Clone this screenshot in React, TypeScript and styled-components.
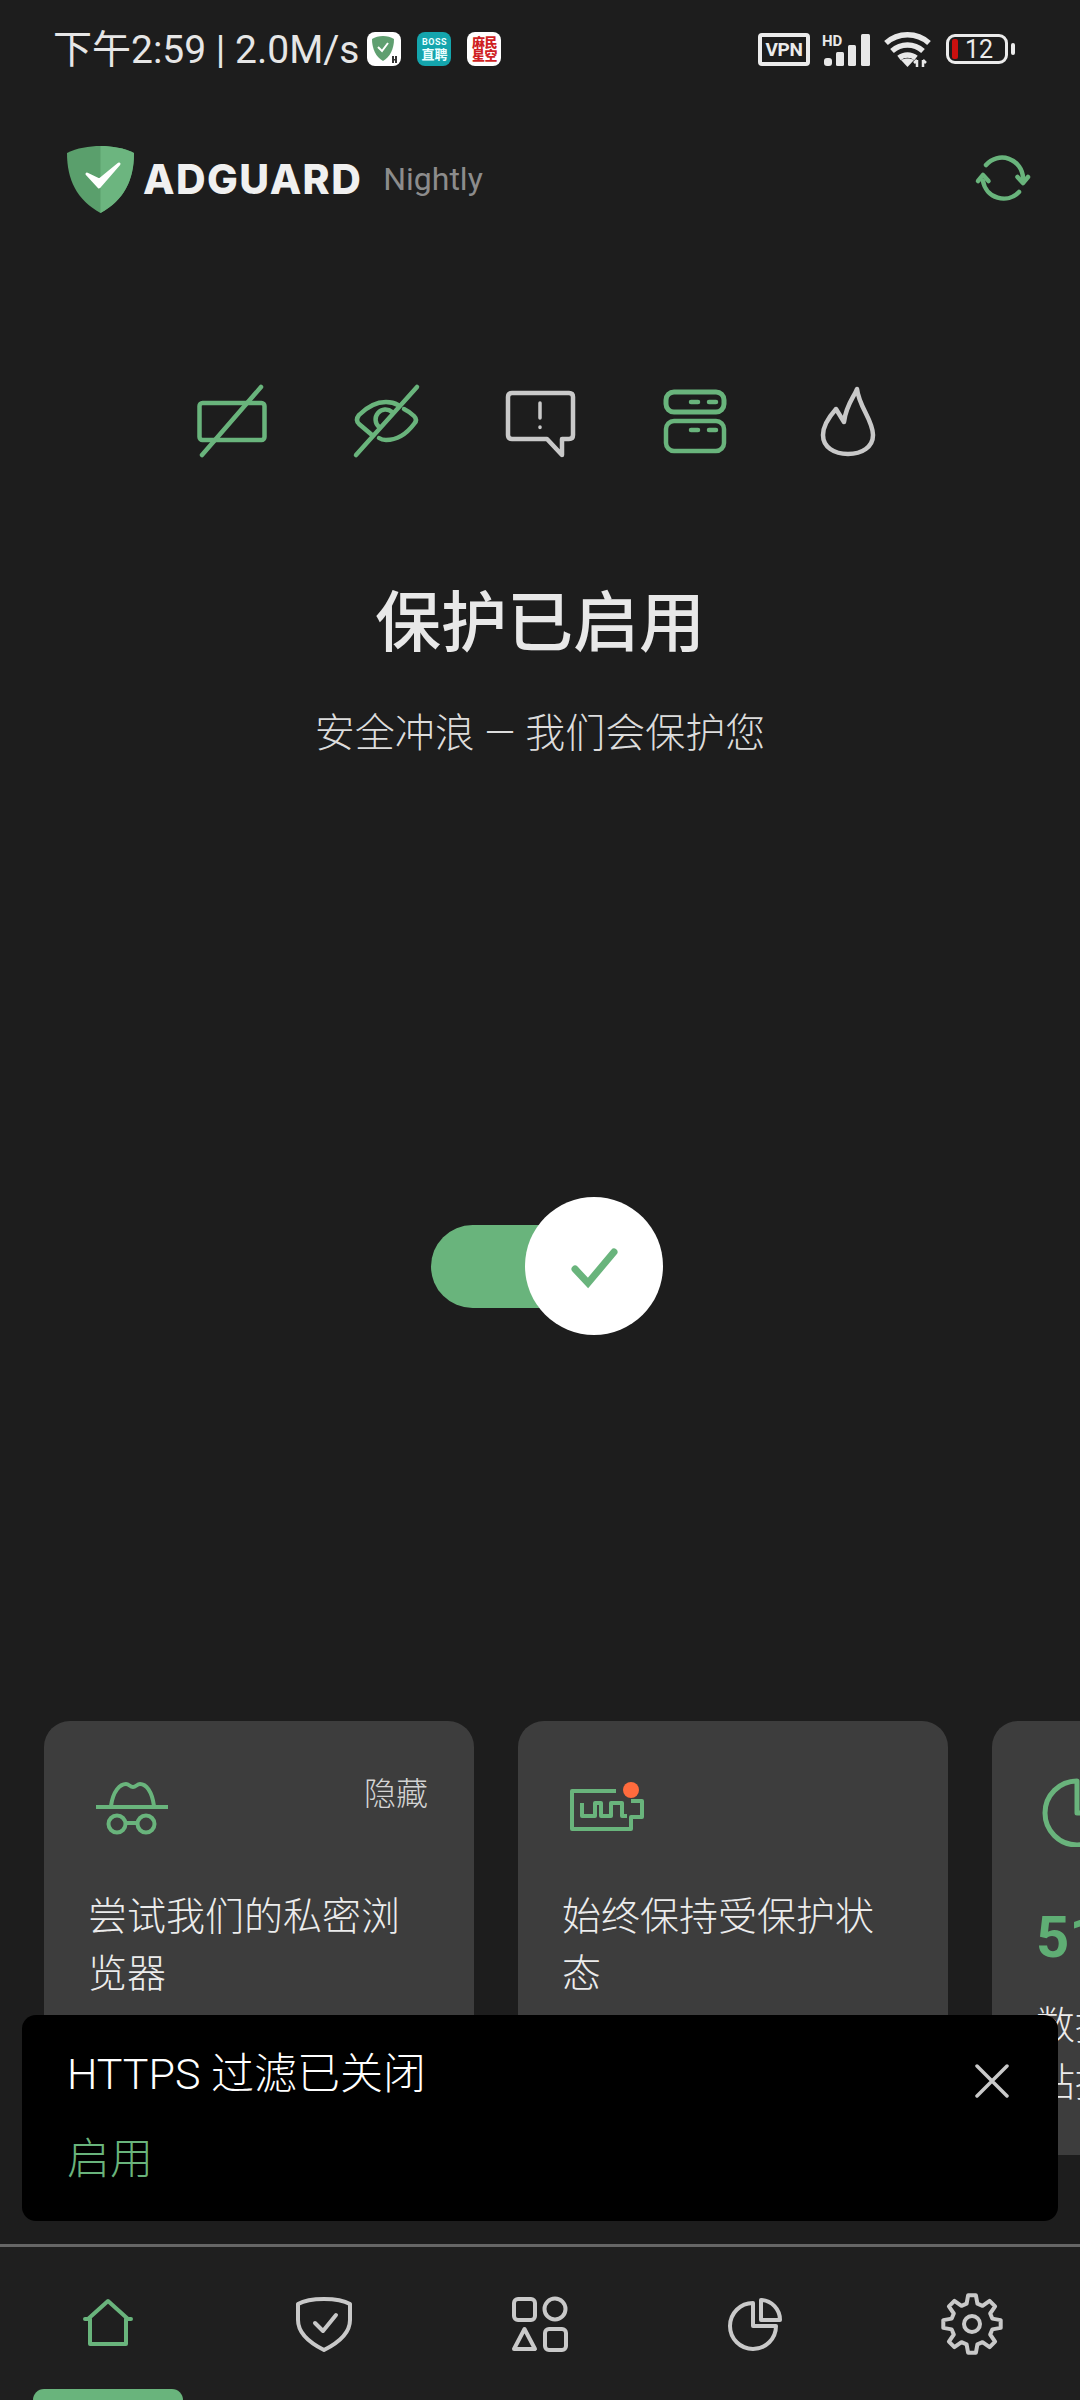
import React from "react";
import styled, { createGlobalStyle } from "styled-components";

const GREEN = "#69b47c";
const GRAY = "#c9c9c9";
const STACK = `Roboto, "Noto Sans CJK SC", sans-serif`;

const Global = createGlobalStyle`
  html, body { margin: 0; padding: 0; background: #1d1d1d; }
  * { box-sizing: border-box; }
`;

const Screen = styled.div`
  position: relative;
  width: 1080px;
  height: 2400px;
  overflow: hidden;
  display: flex;
  flex-direction: column;
  background: #1d1d1d;
  font-family: ${STACK};
  color: #e8e8e8;
`;

/* status bar */
const StatusBar = styled.div`
  height: 98px;
  flex: none;
  display: flex;
  align-items: center;
  padding: 0 65px 0 53px;
`;
const Clock = styled.span`
  font-size: 39px;
  line-height: 1;
  color: #e6e6e6;
  white-space: nowrap;
  margin: 2px 8px 0 0;
`;
const AppBadge = styled.div<{ $bg: string; $fg: string }>`
  width: 34px;
  height: 34px;
  border-radius: 8px;
  margin-right: 16px;
  flex: none;
  display: flex;
  flex-direction: column;
  align-items: center;
  justify-content: center;
  overflow: hidden;
  background: ${(p) => p.$bg};
  color: ${(p) => p.$fg};
  font-weight: 700;
`;
const BadgeSmall = styled.span`
  font-size: 9px;
  line-height: 11px;
  letter-spacing: 0.5px;
`;
const BadgeCjk = styled.span`
  font-size: 13px;
  line-height: 14px;
`;
const SealText = styled.span`
  font-size: 13px;
  line-height: 13px;
  letter-spacing: -0.5px;
  font-weight: 900;
`;
const StatusRight = styled.div`
  margin-left: auto;
  display: flex;
  align-items: center;
  gap: 12px;
`;
const VpnBadge = styled.div`
  width: 52px;
  height: 33px;
  border: 4px solid #ebebeb;
  border-radius: 4px;
  display: flex;
  align-items: center;
  justify-content: center;
  font-size: 19px;
  font-weight: 700;
  letter-spacing: -0.3px;
  color: #ebebeb;
`;
const Battery = styled.div`
  display: flex;
  align-items: center;
  gap: 3px;
  margin-left: 3px;
`;
const BatteryBody = styled.div`
  width: 62px;
  height: 30px;
  border: 3px solid #ebebeb;
  border-radius: 9px;
  display: flex;
  align-items: center;
  padding-left: 3px;
`;
const BatteryFill = styled.div`
  width: 6px;
  height: 20px;
  border-radius: 2px;
  background: #c8100f;
`;
const BatteryText = styled.span`
  font-size: 25px;
  line-height: 1;
  margin-left: 7px;
  color: #ebebeb;
`;
const BatteryNub = styled.div`
  width: 4px;
  height: 12px;
  border-radius: 2px;
  background: #ebebeb;
`;

/* header */
const Header = styled.header`
  height: 162px;
  flex: none;
  display: flex;
  align-items: center;
  padding: 0 47px 0 67px;
`;
const WordMark = styled.span`
  font-family: Inter, sans-serif;
  font-size: 41px;
  font-weight: 800;
  line-height: 1;
  color: #f0f0f0;
  margin-left: 9px;
  letter-spacing: 1.4px;
  white-space: nowrap;
`;
const Edition = styled.span`
  font-size: 32px;
  line-height: 1;
  color: #8c8c8c;
  margin-left: 21px;
`;
const HeaderAction = styled.div`
  margin-left: auto;
  display: flex;
`;

/* feature icons */
const FeatureRow = styled.div`
  margin-top: 121px;
  flex: none;
  display: flex;
  justify-content: center;
  gap: 74px;
`;
const FeatureIcon = styled.svg<{ $on?: boolean }>`
  width: 80px;
  height: 80px;
  flex: none;
  fill: none;
  stroke: ${(p) => (p.$on ? GREEN : GRAY)};
  stroke-width: 4.5;
  stroke-linecap: round;
  stroke-linejoin: round;
`;

/* hero text */
const Title = styled.h1`
  margin: 123px 0 0;
  font-size: 66px;
  line-height: 80px;
  font-weight: 500;
  text-align: center;
  color: #e8e8e8;
`;
const Subtitle = styled.p`
  margin: 45px 0 0;
  font-size: 40px;
  line-height: 50px;
  font-weight: 300;
  text-align: center;
  color: #dcdcdc;
`;

/* toggle */
const Toggle = styled.div`
  position: relative;
  margin: 438px 0 0 431px;
  width: 232px;
  height: 138px;
  flex: none;
  display: flex;
  align-items: center;
`;
const ToggleTrack = styled.div`
  width: 190px;
  height: 83px;
  border-radius: 42px;
  background: ${GREEN};
`;
const ToggleKnob = styled.div`
  position: absolute;
  top: 0;
  right: 0;
  width: 138px;
  height: 138px;
  border-radius: 50%;
  background: #fff;
  display: flex;
  align-items: center;
  justify-content: center;
`;

/* cards */
const CardRow = styled.div`
  margin-top: 386px;
  padding-left: 44px;
  flex: none;
  display: flex;
  gap: 44px;
`;
const Card = styled.article`
  width: 430px;
  height: 434px;
  flex: none;
  border-radius: 26px;
  background: #3d3d3d;
  padding: 0 46px 0 44px;
`;
const CardHead = styled.div<{ $h: number }>`
  height: ${(p) => p.$h}px;
  padding-top: 56px;
  display: flex;
  justify-content: space-between;
  align-items: flex-start;
`;
const CardIcon = styled.svg`
  width: 80px;
  height: 70px;
  margin-left: 2px;
  flex: none;
  fill: none;
  stroke: ${GREEN};
  stroke-width: 4;
  stroke-linejoin: round;
`;
const Dismiss = styled.span`
  font-size: 32px;
  line-height: 40px;
  font-weight: 300;
  color: #d4d4d4;
  margin-top: -3px;
`;
const CardText = styled.p`
  margin: 0;
  font-size: 39px;
  line-height: 57px;
  font-weight: 300;
  color: #ececec;
`;
const CardStat = styled.div`
  font-size: 58px;
  line-height: 64px;
  font-weight: 700;
  color: #5fae74;
  margin-bottom: 29px;
`;

/* toast */
const Toast = styled.div`
  position: absolute;
  left: 22px;
  bottom: 179px;
  width: 1036px;
  height: 206px;
  border-radius: 14px;
  background: #000;
  padding: 31px 49px 0 45px;
  display: flex;
  justify-content: space-between;
  align-items: flex-start;
`;
const ToastTitle = styled.div`
  font-size: 43px;
  line-height: 56px;
  font-weight: 300;
  color: #fff;
`;
const ToastAction = styled.div`
  font-size: 43px;
  line-height: 56px;
  font-weight: 300;
  color: ${GREEN};
  margin-top: 29px;
`;
const ToastClose = styled.svg`
  width: 34px;
  height: 34px;
  margin-top: 18px;
  flex: none;
  stroke: ${GRAY};
  stroke-width: 3.5;
  stroke-linecap: round;
`;

/* nav */
const Nav = styled.nav`
  margin-top: auto;
  height: 156px;
  flex: none;
  border-top: 3px solid #666;
  background: #1f1f1f;
  display: grid;
  grid-template-columns: repeat(5, 1fr);
`;
const Tab = styled.div`
  position: relative;
  display: flex;
  align-items: center;
  justify-content: center;
`;
const TabIcon = styled.svg<{ $on?: boolean }>`
  width: 64px;
  height: 64px;
  fill: none;
  stroke: ${(p) => (p.$on ? GREEN : GRAY)};
  stroke-width: 4;
  stroke-linejoin: round;
  stroke-linecap: round;
`;
const TabMarker = styled.div`
  position: absolute;
  left: 33px;
  bottom: 0;
  width: 150px;
  height: 11px;
  border-radius: 12px 12px 0 0;
  background: ${GREEN};
`;

function gearPath(teeth: number, cx: number, cy: number, rOut: number, rIn: number) {
  const pts: string[] = [];
  const step = (Math.PI * 2) / teeth;
  for (let i = 0; i < teeth; i++) {
    const a = -Math.PI / 2 + i * step;
    const seq: [number, number][] = [
      [rIn, a - step * 0.33],
      [rOut, a - step * 0.17],
      [rOut, a + step * 0.17],
      [rIn, a + step * 0.33],
    ];
    seq.forEach(([r, t]) => {
      pts.push(`${(cx + r * Math.cos(t)).toFixed(1)} ${(cy + r * Math.sin(t)).toFixed(1)}`);
    });
  }
  return `M${pts.join(" L")} Z`;
}

const Shield = () => (
  <svg width="67" height="67" viewBox="0 0 67 67">
    <path d="M33.5 0C45 0 57 2 67 7C67 34 57 54 33.5 67C10 54 0 34 0 7C10 2 22 0 33.5 0Z" fill="#5a9f6c" />
    <path d="M33.5 0C45 0 57 2 67 7C67 34 57 54 33.5 67Z" fill="#6cb57f" />
    <path d="M20 28L32 41L52 18L32.5 34Z" fill="#fff" stroke="#fff" strokeWidth="3" strokeLinejoin="round" />
  </svg>
);

const Refresh = () => (
  <svg width="60" height="50" viewBox="0 0 60 50" fill="none" stroke={GREEN} strokeWidth="4.5" strokeLinecap="round" strokeLinejoin="round">
    <path d="M13 11A21 21 0 0 1 50 24" />
    <path d="M44.5 23L50 29L55 23" />
    <path d="M46 38A21 21 0 0 1 10 27" />
    <path d="M5 27L10 21L15.5 27" />
  </svg>
);

const SignalIcon = () => (
  <svg width="50" height="35" viewBox="0 0 50 35" fill="#e8e8e8">
    <text x="0" y="14" fontFamily="Roboto, sans-serif" fontSize="15" fontWeight="700">HD</text>
    <rect x="2" y="26" width="8" height="8" rx="3" />
    <rect x="14" y="20" width="8" height="14" rx="1.5" />
    <rect x="26" y="13" width="8" height="21" rx="1.5" />
    <rect x="39" y="2" width="9" height="32" rx="1.5" />
  </svg>
);

const WifiIcon = () => (
  <svg width="47" height="37" viewBox="0 0 47 37" fill="none" stroke="#e8e8e8" strokeWidth="5.5">
    <path d="M2 12C14 1 33 1 45 12" />
    <path d="M8 20C17 12 30 12 39 20" />
    <path d="M15 27C20 23 27 23 32 27" />
    <path d="M23.5 36L17 29C21 27 26 27 30 29Z" fill="#e8e8e8" stroke="none" />
    <path d="M33 36V29M33 29L30 32" strokeWidth="2.5" />
    <path d="M39 29V36M39 29L42 32" strokeWidth="2.5" />
  </svg>
);

const MiniShield = () => (
  <svg width="28" height="30" viewBox="0 0 28 30">
    <path d="M13 2C17 2 21 3 24 5C24 15 20 23 13 27C6 23 2 15 2 5C5 3 9 2 13 2Z" fill="#5f9f70" />
    <path d="M8 13L12 17L18 9" fill="none" stroke="#fff" strokeWidth="2" />
    <rect x="22" y="22" width="2" height="7" fill="#333" />
    <rect x="25" y="22" width="2" height="7" fill="#333" />
    <rect x="22" y="25" width="5" height="1.5" fill="#333" />
  </svg>
);

export default function App() {
  return (
    <Screen>
      <Global />
      <StatusBar>
        <Clock>下午2:59 | 2.0M/s</Clock>
        <AppBadge $bg="#fff" $fg="#333"><MiniShield /></AppBadge>
        <AppBadge $bg="#14a5ad" $fg="#eaffff">
          <BadgeSmall>BOSS</BadgeSmall>
          <BadgeCjk>直聘</BadgeCjk>
        </AppBadge>
        <AppBadge $bg="#fff" $fg="#cf1f24">
          <SealText>麻民</SealText>
          <SealText>星空</SealText>
        </AppBadge>
        <StatusRight>
          <VpnBadge>VPN</VpnBadge>
          <SignalIcon />
          <WifiIcon />
          <Battery>
            <BatteryBody>
              <BatteryFill />
              <BatteryText>12</BatteryText>
            </BatteryBody>
            <BatteryNub />
          </Battery>
        </StatusRight>
      </StatusBar>

      <Header>
        <Shield />
        <WordMark>ADGUARD</WordMark>
        <Edition>Nightly</Edition>
        <HeaderAction><Refresh /></HeaderAction>
      </Header>

      <FeatureRow>
        <FeatureIcon $on viewBox="0 0 80 80">
          <rect x="7.5" y="22" width="65" height="37" rx="3" />
          <path d="M69 6L10 74" />
        </FeatureIcon>
        <FeatureIcon $on viewBox="0 0 80 80">
          <path d="M26 54L13 43Q9 39 13 34Q26 21 40 21Q47 21 52 24" />
          <path d="M58 28Q64 31 68 35Q72 39 68 43Q56 59 40 59Q36 59 33 57" />
          <path d="M46 31A9 9 0 0 0 33 46" />
          <path d="M71 6L10 74" />
        </FeatureIcon>
        <FeatureIcon viewBox="0 0 80 80">
          <path d="M12 12H69Q73 12 73 16V54Q73 58 69 58H62V74L47 58H12Q8 58 8 54V16Q8 12 12 12Z" />
          <path d="M40 22V37M40 46V46.5" strokeWidth="3.5" />
        </FeatureIcon>
        <FeatureIcon $on viewBox="0 0 80 80">
          <rect x="12" y="11" width="58" height="20" rx="8" strokeWidth="5" />
          <rect x="12" y="40" width="58" height="30" rx="8" />
          <path d="M37 21H44M55 21H62M37 49H44M55 49H62" />
        </FeatureIcon>
        <FeatureIcon viewBox="0 0 80 80">
          <path d="M49 8C46 16 38 24 36 41L28 28C20 37 15 45 15 54C15 66 26 73 40 73C54 73 65 66 65 54C65 39 51 26 49 8Z" />
        </FeatureIcon>
      </FeatureRow>

      <Title>保护已启用</Title>
      <Subtitle>安全冲浪 — 我们会保护您</Subtitle>

      <Toggle>
        <ToggleTrack />
        <ToggleKnob>
          <svg width="60" height="50" viewBox="0 0 60 50" fill="none" stroke={GREEN} strokeWidth="7" strokeLinecap="round">
            <path d="M11 28L24 42L50 11" />
          </svg>
        </ToggleKnob>
      </Toggle>

      <CardRow>
        <Card>
          <CardHead $h={168}>
            <CardIcon viewBox="0 0 80 70">
              <path d="M6 30H78" />
              <path d="M21 29C23 14 30 7 36 7C39 7 40 10 43 10C46 10 47 7 50 7C56 7 62 14 64 29" />
              <circle cx="27" cy="47" r="8.5" />
              <circle cx="56" cy="47" r="8.5" />
              <path d="M35 46H48" />
            </CardIcon>
            <Dismiss>隐藏</Dismiss>
          </CardHead>
          <CardText>尝试我们的私密浏览器</CardText>
        </Card>
        <Card>
          <CardHead $h={168}>
            <CardIcon viewBox="0 0 80 70">
              <path d="M52 14H8V52H67V40H78V24H67" />
              <path d="M18 26V39H31V26H37V39H47V26H58V39H63" />
              <circle cx="67" cy="13" r="8" fill="#ff6b3d" stroke="none" />
            </CardIcon>
          </CardHead>
          <CardText>始终保持受保护状态</CardText>
        </Card>
        <Card>
          <CardHead $h={184}>
            <CardIcon viewBox="0 0 80 70">
              <path d="M39 4A32 32 0 1 0 71 36H39Z" strokeWidth="5" />
            </CardIcon>
          </CardHead>
          <CardStat>51%</CardStat>
          <CardText>
            数据
            <br />
            站持
          </CardText>
        </Card>
      </CardRow>

      <Toast>
        <div>
          <ToastTitle>HTTPS 过滤已关闭</ToastTitle>
          <ToastAction>启用</ToastAction>
        </div>
        <ToastClose viewBox="0 0 34 34">
          <path d="M2 2L32 32M32 2L2 32" />
        </ToastClose>
      </Toast>

      <Nav>
        <Tab>
          <TabIcon $on viewBox="0 0 64 64">
            <path d="M14 27V52H50V27" />
            <path d="M9 27H12L32 9L52 27H55" />
          </TabIcon>
          <TabMarker />
        </Tab>
        <Tab>
          <TabIcon viewBox="0 0 64 64">
            <path d="M32 7C42 7 51 8 58 12V28C58 42 46 51 32 58C18 51 6 42 6 28V12C13 8 22 7 32 7Z" />
            <path d="M23 31L31 39L44 23" />
          </TabIcon>
        </Tab>
        <Tab>
          <TabIcon viewBox="0 0 64 64">
            <rect x="6" y="7" width="21" height="21" rx="4" />
            <circle cx="47" cy="17" r="10.5" />
            <path d="M16.5 37L27 57H6Z" />
            <rect x="37" y="37" width="21" height="21" rx="4" />
          </TabIcon>
        </Tab>
        <Tab>
          <TabIcon viewBox="0 0 64 64">
            <path d="M29 11A23 23 0 1 0 52 34H29Z" />
            <path d="M37 8A20 20 0 0 1 56 28H37Z" />
          </TabIcon>
        </Tab>
        <Tab>
          <TabIcon viewBox="0 0 64 64">
            <path d={gearPath(8, 32, 32, 29, 21)} />
            <circle cx="32" cy="32" r="8" />
          </TabIcon>
        </Tab>
      </Nav>
    </Screen>
  );
}
